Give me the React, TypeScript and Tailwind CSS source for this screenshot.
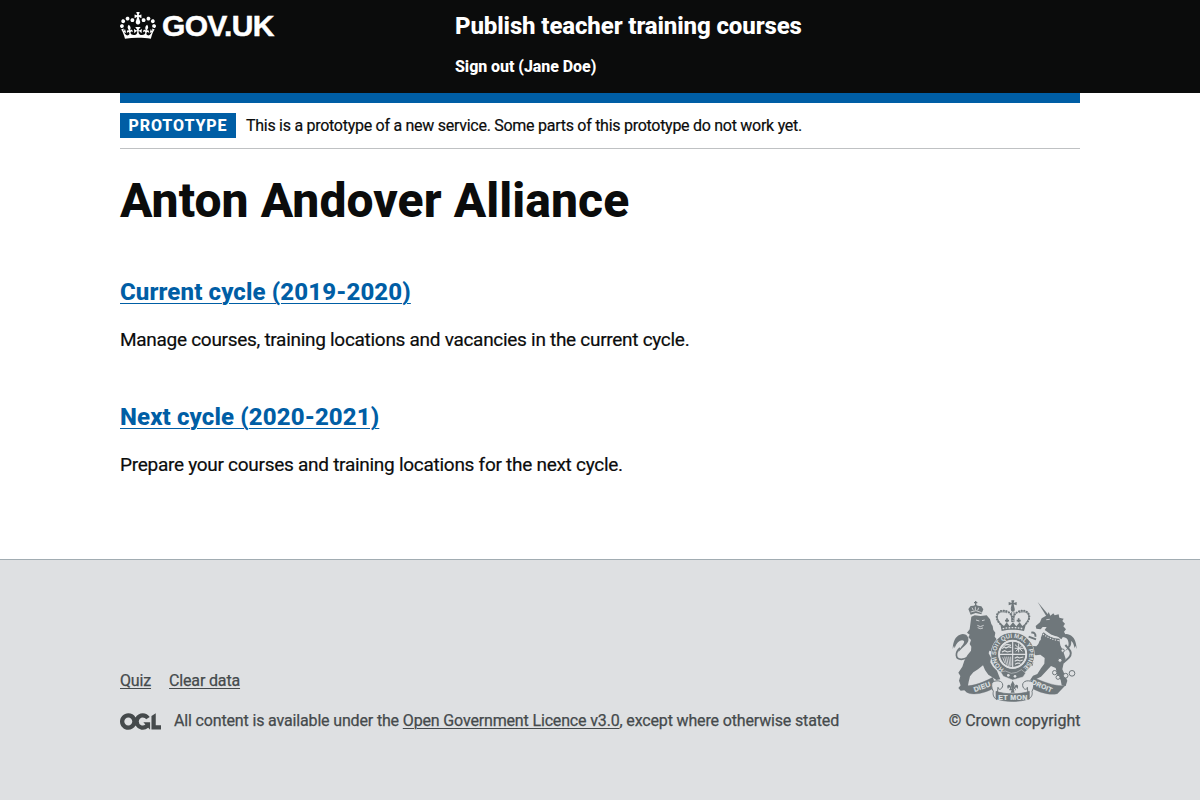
import React from "react";

function Crown() {
  return (
    <svg viewBox="0 0 132 97" className="mt-px block h-[27px] w-[36px]" fill="currentColor" fillRule="evenodd" preserveAspectRatio="none" aria-hidden="true">
      <path d="M25 30.2c3.5 1.5 7.7-.2 9.1-3.7 1.5-3.6-.2-7.8-3.9-9.2-3.6-1.4-7.6.3-9.1 3.9-1.4 3.5.3 7.5 3.9 9zM9 39.5c3.6 1.5 7.8-.2 9.2-3.7 1.5-3.6-.2-7.8-3.9-9.1-3.6-1.5-7.6.2-9.1 3.8-1.4 3.5.3 7.5 3.8 9zM4.4 57.2c3.5 1.5 7.7-.2 9.1-3.8 1.5-3.6-.2-7.7-3.9-9.1-3.5-1.5-7.6.3-9.1 3.8-1.4 3.5.3 7.6 3.9 9.1zm38.3-21.4c3.5 1.5 7.7-.2 9.1-3.8 1.5-3.6-.2-7.7-3.9-9.1-3.6-1.5-7.6.3-9.1 3.8-1.3 3.6.4 7.7 3.9 9.1zm64.4-5.6c-3.6 1.5-7.8-.2-9.1-3.7-1.5-3.6.2-7.8 3.8-9.2 3.6-1.4 7.7.3 9.2 3.9 1.3 3.5-.4 7.5-3.9 9zm15.9 9.3c-3.6 1.5-7.7-.2-9.1-3.7-1.5-3.6.2-7.8 3.7-9.1 3.6-1.5 7.7.2 9.2 3.8 1.5 3.5-.3 7.5-3.8 9zm4.7 17.7c-3.6 1.5-7.8-.2-9.2-3.8-1.5-3.6.2-7.7 3.9-9.1 3.6-1.5 7.7.3 9.2 3.8 1.3 3.5-.4 7.6-3.9 9.1zM89.3 35.8c-3.6 1.5-7.8-.2-9.2-3.8-1.4-3.6.2-7.7 3.9-9.1 3.6-1.5 7.7.3 9.2 3.8 1.4 3.6-.3 7.7-3.9 9.1zM69.7 17.7l8.9 4.7V9.3l-8.9 2.8c-.2-.3-.5-.6-.9-.9L72.4 0H59.6l3.5 11.2c-.3.3-.6.5-.9.9l-8.8-2.8v13.1l8.8-4.7c.3.3.6.7.9.9l-5 15.4v.1c-.2.8-.4 1.6-.4 2.4 0 4.1 3.1 7.5 7 8.1h.2c.3 0 .7.1 1 .1.4 0 .7 0 1-.1h.2c4-.6 7.1-4.1 7.1-8.1 0-.8-.1-1.7-.4-2.4V34l-5.1-15.4c.4-.2.7-.6 1-.9zM66 92.8c16.9 0 32.8 1.1 47.1 3.2 4-16.9 8.9-26.7 14-33.5l-9.6-3.4c1 4.9 1.1 7.2 0 10.2-1.5-1.4-3-4.3-4.2-8.7L108.6 76c2.8-2 5-3.2 7.5-3.3-4.4 9.4-10 11.9-13.6 11.2-4.3-.8-6.3-4.6-5.6-7.9 1-4.7 5.7-5.9 8-.5 4.3-8.7-3-11.4-7.6-8.8 7.1-7.2 7.9-13.5 2.1-21.1-8 6.1-8.1 12.3-4.5 20.8-4.7-5.4-12.1-2.5-9.5 6.2 3.4-5.2 7.9-2 7.2 3.1-.6 4.3-6.4 7.8-13.5 7.2-10.3-.9-10.9-8-11.2-13.8 2.5-.5 7.1 1.8 11 7.3L80.2 60c-4.1 4.4-8 5.3-12.3 5.4 1.4-4.4 8-11.6 8-11.6H55.5s6.4 7.2 7.9 11.6c-4.2-.1-8-1-12.3-5.4l1.4 16.4c3.9-5.5 8.5-7.7 10.9-7.3-.3 5.8-.9 12.8-11.1 13.8-7.2.6-12.9-2.9-13.5-7.2-.7-5 3.8-8.3 7.1-3.1 2.7-8.7-4.6-11.6-9.4-6.2 3.7-8.5 3.6-14.7-4.6-20.8-5.8 7.6-5 13.9 2.2 21.1-4.7-2.6-11.9.1-7.7 8.8 2.3-5.5 7.1-4.2 8.1.5.7 3.3-1.3 7.1-5.7 7.9-3.5.7-9-1.8-13.5-11.2 2.5.1 4.7 1.3 7.5 3.3l-4.7-15.4c-1.2 4.4-2.7 7.2-4.3 8.7-1.1-3-.9-5.3 0-10.2l-9.5 3.4c5 6.9 9.9 16.7 14 33.5 14.8-2.1 30.8-3.2 47.7-3.2z" />
    </svg>
  );
}

function OglLogo() {
  return (
    <svg viewBox="0 0 483.2 195.7" className="block h-[17px] w-[41px]" fill="currentColor" aria-hidden="true">
      <path d="M421.5 142.8V.1l-50.7 32.3v161.1h112.4v-50.7zm-122.3-9.6A47.12 47.12 0 0 1 221 97.8c0-26 21.1-47.1 47.1-47.1 16.7 0 31.4 8.7 39.7 21.8l42.7-27.2A97.63 97.63 0 0 0 268.1 0c-36.5 0-68.3 20.1-85.1 49.7A98 98 0 0 0 97.8 0C43.9 0 0 43.9 0 97.8s43.9 97.8 97.8 97.8c36.5 0 68.3-20.1 85.1-49.7a97.76 97.76 0 0 0 149.6 25.4l19.4 22.2h3v-87.8h-80l24.3 27.5zM97.8 145c-26 0-47.1-21.1-47.1-47.1s21.1-47.1 47.1-47.1 47.1 21.1 47.1 47.1S123.8 145 97.8 145" />
    </svg>
  );
}

const INK = "#6f777b";
const PAPER = "#dee0e2";

function RoyalArms() {
  return (
    <svg viewBox="36 30 375 306" className="block h-[102px] w-[125px]" aria-hidden="true">
      {/* lion */}
      <g fill={INK}>
        <path d="M92 74l-7-17 7-9 9-1 6-3 7 3 10 2 6 9-6 15-17-4z" />
        <path d="M107 33v12M102 38h10" stroke={INK} strokeWidth="4" />
        <path d="M94 80l10-4 18 2 18-2 10 12 4 14 4 6 2 12 6 8-2 12 6 8-3 12 8 8 8 10-5 14-10 2-9-9-11-3-2 8 7 13-2 14 8 13 12 12 6 16 4 10-12 2-12-8-12-8-10-14-6-14-15 12-14 9-10 12-4 16-3 16 10 8 2 10-14-1-8-7-11 1-7-8 7-8-5-14 4-14-6-10 12-18 6-18 9-16 11-14 1-12-5-8 4-12-8-8 4-8-8-6 8-10z" />
        <path d="M38 177c1-22 8-38 22-43 14-6 28 3 25 19-5 13-20 20-30 34 6-18 20-26 17-34-8-6-22 2-28 22l-2-8z" />
      </g>
      <path d="M60 174c-16 14-14 34 4 34 8 0 14-3 20-6" fill="none" stroke={INK} strokeWidth="5" />
      <g stroke={PAPER} strokeWidth="2.5" fill="none">
        <path d="M92 66l16-4 17 6M96 53l4 8M116 53l-3 8M106 50v10" />
        <path d="M108 90l10 3M126 92l8-2M112 106l9 4 10-4M113 113l8 3 8-2" />
      </g>

      {/* unicorn */}
      <g fill={INK}>
        <path d="M293 36l35 42-6 5z" />
        <path d="M322 76l4-10 5 11 9-7 4 6 12-3 2 10 13 3-4 7 8 8-5 8 8 9-6 7 5 10-8 5-5 8-8-6-22-8-20-14 6-9-12 0-6 7-13-2-2-8 13-11 5-12 12-7z" />
        <path d="M308 130l51 24 2 12 8 16 8 24-6 14-4 18 8 18 7 16-5 16-12-2-3-16-10-14-5-22-14-6-14 15-16 17-16 8-18 4 10-15 13-5 11-17 10-14 1-17-13-10-14 2-10-8-10 13-2 12 8 6 7-2-2 10-10 1-13-10-2-14 4-15-10-7-4-10 12-7 18 2 16 2 6-7z" />
        <path d="M410 177c-1-22-8-38-22-43-10-4-20-1-24 7 8-1 16 2 19 8 5 12 4 22-8 34 18-10 20-20 18-30 6 3 9 12 11 22l2-8z" />
      </g>
      <g fill="none" stroke={INK}>
        <path d="M376 165c12 14 20 20 15 32-4 10-14 12-22 22" strokeWidth="6" />
        <path d="M274 128c8-2 14 4 12 12M266 140l22 8M309 129c10 11 29 20 50 20" strokeWidth="6" />
        <g strokeWidth="3">
          <circle cx="368" cy="182" r="5" fill={PAPER} />
          <circle cx="360" cy="211" r="6" fill={PAPER} />
          <circle cx="344" cy="248" r="6.5" fill={PAPER} />
          <circle cx="354" cy="262" r="6" fill={PAPER} />
          <circle cx="377" cy="257" r="7" fill={PAPER} />
          <circle cx="396" cy="250" r="8.500" fill={PAPER} />
        </g>
      </g>
      <g stroke={PAPER} strokeWidth="3.500" fill="none" strokeLinecap="round">
        <path d="M310 121c13 12 28 19 47 22" strokeDasharray="5 4" />
        <path d="M310 133c13 10 28 16 46 19" strokeDasharray="1 7" />
        <path d="M320 89l8-1" strokeWidth="2.500" />
        <circle cx="298" cy="147" r="3" />
      </g>

      {/* shield, garter and motto */}
      <circle cx="218" cy="193" r="66" fill={PAPER} />
      <circle cx="218" cy="193" r="54" fill="none" stroke={INK} strokeWidth="21" />
      <circle cx="218" cy="193" r="38" fill={INK} />
      <g stroke={PAPER} fill="none">
        <circle cx="218" cy="193" r="41" strokeWidth="4" />
        <path d="M218 153v80M178 193h80" strokeWidth="3.500" />
        <path d="M187 176l5-6 6 4 8-4 8 3M186 186l8-4 8 4 12-3M193 166l9-3 11 3" strokeWidth="3.500" />
        <path d="M224 205l8-4 6 3 12-3M224 214l8-4 8 3 8-3M225 223l8-4 8 1" strokeWidth="3.500" />
        <path d="M225 164l22 20M247 166l-20 18M236 160v27M224 175h27" strokeWidth="3" />
        <path d="M188 202l7 18M194 200l6 24M200 200l5 28M206 200l4 29M212 200l1 27" strokeWidth="2.500" />
      </g>
      <path id="garter" d="M191 238a52 52 0 1 1 54 0" fill="none" transform="translate(8.700 8) scale(.96)" />
      <text fill={PAPER} fontSize="19" fontWeight="700" fontFamily="Liberation Sans, sans-serif">
        <textPath href="#garter" textLength="252" lengthAdjust="spacingAndGlyphs">HONI SOIT QUI MAL Y PENSE</textPath>
      </text>
      <path d="M182 246l8 13 28 11 31-9 8-12-13-10-14 8-16 3-18-7z" fill={INK} stroke={PAPER} strokeWidth="1.5" />
      <g fill={PAPER}>
        <circle cx="205" cy="256" r="4" />
        <circle cx="225" cy="259" r="4" />
      </g>

      {/* imperial crown */}
      <g fill={INK}>
        <path d="M214 31h9l-2 8 9-3v10l-9-3 3 13h-12l3-13-9 3V36l9 3z" />
        <circle cx="218.500" cy="59" r="6" />
        <path d="M180 98l5 25c20-5 45-5 67 0l7-25-12 10-8-11-10 12-10-12-10 12-9-12-8 11z" />
      </g>
      <g fill="none" stroke={INK} strokeLinecap="round">
        <path d="M181 102c-24-23-5-49 22-37 11 5 15 17 15 31 0-14 5-26 17-31 27-12 46 14 22 37" strokeWidth="6" strokeDasharray="1 7" />
        <path d="M181 100c-20-21-5-42 19-32M257 100c20-21 5-42-19-32M215 67v28M222 67v28" strokeWidth="2.500" />
      </g>
      <path d="M188 116c19-4 42-4 61 0" fill="none" stroke={PAPER} strokeWidth="4" strokeDasharray="5 4" />
      <path d="M195 92h12M201 85v12M230 92h12M236 85v12" stroke={INK} strokeWidth="5" />

      {/* ribbon */}
      <g stroke={INK} strokeLinejoin="round">
        <path d="M62 284c22 10 62-3 96-22l10 28c-25 16-56 26-82 20z" fill={INK} strokeWidth="1" />
        <path d="M376 286c-24 5-65-9-98-25l-10 29c25 16 59 27 84 21z" fill={INK} strokeWidth="1" />
        <path d="M158 276c18-9 35 0 29 15-4 10-13 8-13 1l-4 37c-10-7-12-15-10-25-6-11-7-23-2-28z" fill={PAPER} strokeWidth="3" />
        <path d="M278 276c-18-9-35 0-29 15 4 10 13 8 13 1l4 36c10-8 12-15 10-24 6-11 7-23 2-28z" fill={PAPER} strokeWidth="3" />
        <path d="M168 304c28 10 72 10 100 0v22c-28 11-72 11-100 0z" fill={INK} strokeWidth="2" />
      </g>
      <g fill={INK}>
        <path d="M218 272l6 12-3 13h-6l-3-13z" />
        <path d="M204 297c-6-10 1-18 8-9 2 4 3 7 2 12h-4c1-5-1-8-3-8zM232 297c6-10-1-18-8-9-2 4-3 7-2 12h4c-1-5 1-8 3-8zM208 297h20v4h-20zM215 300h6l3 8h-12z" />
      </g>
      <g fill={PAPER} stroke={PAPER} strokeWidth=".6" fontFamily="Liberation Sans, sans-serif" fontWeight="700">
        <text x="104" y="306" fontSize="21" textLength="52" transform="rotate(-20 104 306)">DIEU</text>
        <text x="175" y="329" fontSize="21" textLength="87">ET MON</text>
        <text x="274" y="281" fontSize="20" textLength="64" transform="rotate(24 274 281)">DROIT</text>
      </g>
    </svg>
  );
}

export default function App() {
  return (
    <div className="flex h-[800px] flex-col overflow-hidden bg-white font-['Roboto','Liberation_Sans',sans-serif] whitespace-nowrap text-[#0b0c0c]">
      <header className="h-[93px] shrink-0 bg-[#0b0c0c] text-white">
        <div className="mx-auto flex w-[960px]">
          <a href="#" className="flex w-[335px] gap-[6px] pt-[11px]">
            <Crown />
            <span className="font-['Liberation_Sans',Arial,sans-serif] text-[30px] leading-[30px] font-bold tracking-[-0.65px] [-webkit-text-stroke:0.5px_white]">GOV.UK</span>
          </a>
          <div className="flex flex-col items-start">
            <a href="#" className="mt-[11px] text-[24px] leading-[30px] font-extrabold tracking-[-0.12px]">Publish teacher training courses</a>
            <a href="#" className="mt-[16px] text-[16px] leading-[20px] font-extrabold tracking-[-0.06px]">Sign out (Jane Doe)</a>
          </div>
        </div>
      </header>

      <div className="mx-auto w-[960px] grow">
        <div className="h-[10px] bg-[#005ea5]" />
        <div className="flex items-center border-b border-[#bfc1c3] py-[10px]">
          <strong className="flex h-[25px] w-[116px] items-center justify-center bg-[#005ea5] text-[16px] leading-none font-extrabold tracking-[0.9px] text-white">PROTOTYPE</strong>
          <span className="ml-[10px] pt-px text-[16px] leading-[24px] tracking-[-0.275px] [-webkit-text-stroke:0.2px]">This is a prototype of a new service. Some parts of this prototype do not work yet.</span>
        </div>
        <main>
          <h1 className="mt-[27px] text-[48px] leading-[50px] font-extrabold tracking-[0.08px]">Anton Andover Alliance</h1>
          <h2 className="mt-[51px] text-[24px] leading-[30px] font-extrabold tracking-[0.12px] text-[#005ea5]">
            <a href="#" className="underline decoration-[1px] underline-offset-[3px]">Current cycle (2019-2020)</a>
          </h2>
          <p className="mt-[20px] text-[19px] leading-[25px] tracking-[-0.29px] [-webkit-text-stroke:0.2px]">Manage courses, training locations and vacancies in the current cycle.</p>
          <h2 className="mt-[50px] text-[24px] leading-[30px] font-extrabold tracking-[0.12px] text-[#005ea5]">
            <a href="#" className="underline decoration-[1px] underline-offset-[3px]">Next cycle (2020-2021)</a>
          </h2>
          <p className="mt-[20px] text-[19px] leading-[25px] tracking-[-0.275px] [-webkit-text-stroke:0.2px]">Prepare your courses and training locations for the next cycle.</p>
        </main>
      </div>

      <footer className="h-[241px] shrink-0 border-t border-[#a1acb2] bg-[#dee0e2] text-[#454a4c]">
        <div className="mx-auto flex w-[960px] items-end justify-between pt-[40px] text-[16px] leading-[20px] tracking-[-0.155px]">
          <div>
            <div className="mb-[20px] flex gap-[18px] [-webkit-text-stroke:0.25px]">
              <a href="#" className="underline decoration-[1px] underline-offset-[2px]">Quiz</a>
              <a href="#" className="underline decoration-[1px] underline-offset-[2px]">Clear data</a>
            </div>
            <div className="flex items-center gap-[13px]">
              <OglLogo />
              <span className="[-webkit-text-stroke:0.25px]">
                All content is available under the{" "}
                <a href="#" className="underline decoration-[1px] underline-offset-[2px]">Open Government Licence v3.0</a>, except where otherwise stated
              </span>
            </div>
          </div>
          <div className="flex w-[131px] flex-col items-center">
            <RoyalArms />
            <a href="#" className="mt-[9px] tracking-[-0.05px] [-webkit-text-stroke:0.25px]">© Crown copyright</a>
          </div>
        </div>
      </footer>
    </div>
  );
}
